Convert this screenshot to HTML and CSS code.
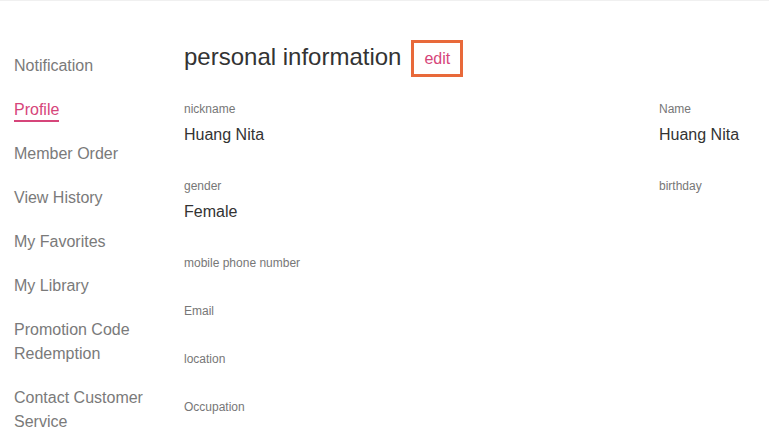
FILE: index.html
```html
<!DOCTYPE html>
<html>
<head>
<meta charset="utf-8">
<link rel="stylesheet" href="styles.css">
</head>
<body>
<div class="page">
  <nav class="sidebar">
    <div class="nav-item">Notification</div>
    <div class="nav-item"><span class="active">Profile</span></div>
    <div class="nav-item">Member Order</div>
    <div class="nav-item">View History</div>
    <div class="nav-item">My Favorites</div>
    <div class="nav-item">My Library</div>
    <div class="nav-item">Promotion Code Redemption</div>
    <div class="nav-item">Contact Customer Service</div>
  </nav>
  <main class="main">
    <div class="header">
      <h1 class="title">personal information</h1>
      <div class="edit">edit</div>
    </div>
    <div class="fields">
      <div class="field">
        <div class="label">nickname</div>
        <div class="value">Huang Nita</div>
      </div>
      <div class="field">
        <div class="label">Name</div>
        <div class="value">Huang Nita</div>
      </div>
      <div class="field">
        <div class="label">gender</div>
        <div class="value">Female</div>
      </div>
      <div class="field">
        <div class="label">birthday</div>
      </div>
      <div class="field first">
        <div class="label">mobile phone number</div>
      </div>
      <div class="field first">
        <div class="label">Email</div>
      </div>
      <div class="field first">
        <div class="label">location</div>
      </div>
      <div class="field first last">
        <div class="label">Occupation</div>
      </div>
    </div>
  </main>
</div>
</body>
</html>
```

FILE: styles.css
```css
html, body {
  margin: 0;
  padding: 0;
  background: #fff;
  font-family: Arial, "Liberation Sans", sans-serif;
}

.page {
  display: flex;
  border-top: 1px solid #f0f0f0;
}

.sidebar {
  width: 150px;
  padding: 53px 20px 0 14px;
  flex-shrink: 0;
}

.nav-item {
  font-size: 16px;
  line-height: 24px;
  color: #7a7a7a;
  margin-bottom: 20px;
}

.nav-item:last-child {
  margin-bottom: 0;
}

.active {
  display: inline-block;
  vertical-align: top;
  color: #d6457a;
  line-height: 20px;
  padding-top: 2px;
  border-bottom: 2px solid #d6457a;
}

.main {
  flex: 1;
  padding-top: 39px;
}

.header {
  display: flex;
  align-items: center;
  margin-bottom: 24px;
}

.title {
  margin: 0 0 4px 0;
  font-size: 24px;
  font-weight: normal;
  color: #333;
  line-height: 30px;
}

.edit {
  margin-left: 10px;
  border: 3px solid #e8693a;
  padding: 0 10px 0 10px;
  height: 31px;
  line-height: 31px;
  font-size: 16px;
  color: #d6457a;
}

.fields {
  display: grid;
  grid-template-columns: 475px 1fr;
}

.field {
  margin-bottom: 32px;
}

.fields .field:nth-child(-n+4) {
  margin-bottom: 31px;
}

.field.first {
  grid-column: 1;
}

.field.last {
  margin-bottom: 0;
}

.label {
  font-size: 12px;
  line-height: 16px;
  color: #777;
}

.value {
  margin-top: 6px;
  font-size: 16px;
  line-height: 24px;
  color: #333;
}
```
